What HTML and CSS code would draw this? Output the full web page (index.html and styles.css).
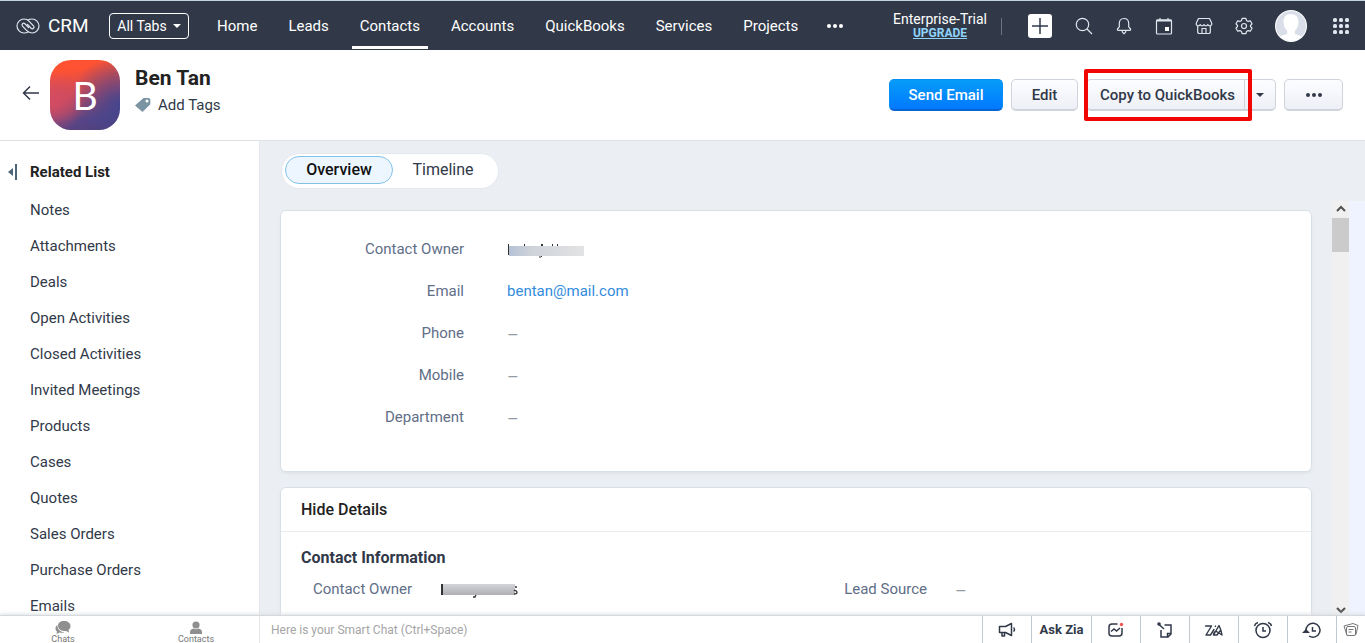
FILE: index.html
```html
<!DOCTYPE html>
<html lang="en">

<head>
    <meta charset="UTF-8">
    <meta name="viewport" content="width=device-width, initial-scale=1.0">
    <title>Ben Tan - CRM</title>
    <link rel="stylesheet" href="styles.css">
</head>

<body>
    <header class="topbar">
        <a href="#" class="logo">
            <svg width="24" height="16" viewBox="0 0 24 16" fill="none" stroke="#dfe6ee" stroke-width="1.2" stroke-linecap="round">
                <path d="M12 14c-1 .700-2.300 1-4 1A7 7 0 0 1 8 1c2.200 0 3.800.800 5.200 2.300l4.300 4.500c1.500 1.700-.700 4-2.400 2.400L11.500 6.500"/>
                <path d="M12 2c1-.700 2.300-1 4-1a7 7 0 0 1 0 14c-2.200 0-3.800-.800-5.200-2.300L6.500 8.200C5 6.500 7.200 4.200 8.900 5.800l3.600 3.700"/>
            </svg>
            <span>CRM</span>
        </a>
        <button class="allTabs">All Tabs <span class="caret"></span></button>
        <nav class="tabs">
            <a href="#">Home</a>
            <a href="#">Leads</a>
            <a href="#" class="active">Contacts</a>
            <a href="#">Accounts</a>
            <a href="#">QuickBooks</a>
            <a href="#">Services</a>
            <a href="#">Projects</a>
        </nav>
        <button class="iconBtn moreTabs" aria-label="More tabs">
            <svg width="18" height="6" fill="#fff"><circle cx="3" cy="3" r="2"/><circle cx="9" cy="3" r="2"/><circle cx="15" cy="3" r="2"/></svg>
        </button>
        <div class="trial">
            <span>Enterprise-Trial</span>
            <a href="#">UPGRADE</a>
        </div>
        <div class="tools">
            <button class="iconBtn" aria-label="Create">
                <svg width="26" height="26"><rect x="1" y="1" width="24" height="24" rx="3" fill="#fff"/><path d="M5 13h16M13 5v16" stroke="#313949" stroke-width="1.500"/></svg>
            </button>
            <button class="iconBtn" aria-label="Search">
                <svg width="18" height="18" fill="none" stroke="#dfe6ee" stroke-width="1.200"><circle cx="7.500" cy="7.500" r="6.200"/><path d="M12 12l5 5"/></svg>
            </button>
            <button class="iconBtn" aria-label="Notifications">
                <svg width="18" height="18" fill="none" stroke="#dfe6ee" stroke-width="1.200" stroke-linejoin="round"><path d="M9 1.500c-3 0-4.700 2-4.700 5v3.300L2.500 12c-.300.800 0 1.300.800 1.300h11.400c.800 0 1.100-.500.800-1.300l-1.800-2.200V6.500c0-3-1.700-5-4.700-5z"/><path d="M7 13.500c0 1.500 1 2.500 2 3.300 1-.800 2-1.800 2-3.300"/></svg>
            </button>
            <button class="iconBtn" aria-label="Calendar">
                <svg width="18" height="18" fill="none" stroke="#dfe6ee" stroke-width="1.200"><rect x="1.500" y="3" width="15" height="14" rx="1"/><path d="M1.500 3.500h15" stroke-width="2"/><path d="M5 1v3M13 1v3"/><rect x="10" y="10" width="4" height="4" fill="#fff" stroke="none"/></svg>
            </button>
            <button class="iconBtn" aria-label="Marketplace">
                <svg width="18" height="18" fill="none" stroke="#dfe6ee" stroke-width="1.200" stroke-linejoin="round"><path d="M3.500 1.500h11L16.700 6v1.500c-.800 1.700-3 1.700-3.900 0-.800 1.700-3 1.700-3.800 0-.800 1.700-3 1.700-3.800 0-.900 1.700-3.100 1.700-3.900 0V6zM2.700 9v6.500l1 1h10.600l1-1V9M7 16.500v-5h4v5"/></svg>
            </button>
            <button class="iconBtn" aria-label="Setup">
                <svg width="18" height="18" fill="none" stroke="#dfe6ee" stroke-width="1.200" stroke-linejoin="round"><circle cx="9" cy="9" r="2.500"/><path d="M7.200 1.300h3.600l.700 2.200 1.500.900 2.300-.600 1.700 3-1.500 1.700v1l1.500 1.700-1.700 3-2.300-.600-1.500.900-.700 2.200H7.200l-.700-2.200-1.500-.900-2.300.600-1.700-3 1.500-1.700v-1L1 6.800l1.700-3 2.300.600 1.500-.900z"/></svg>
            </button>
            <button class="iconBtn" aria-label="Profile">
                <svg width="32" height="32"><defs><clipPath id="round"><circle cx="16" cy="16" r="15"/></clipPath></defs><circle cx="16" cy="16" r="16" fill="#fff"/><g clip-path="url(#round)"><rect width="32" height="32" fill="#d9dee8"/><path fill="#fff" d="M16 4c-4.800 0-7.500 3-7.500 7.500 0 4 1.300 7.300 3.700 9.300v3c-1.500 1-5 1.300-7.700 3V32h23v-5.200c-2.700-1.700-6.200-2-7.700-3v-3c2.400-2 3.700-5.300 3.700-9.300C23.500 7 20.800 4 16 4z"/></g></svg>
            </button>
            <button class="iconBtn apps" aria-label="Apps">
                <svg width="18" height="18" fill="#dfe6ee"><rect x="1" y="1" width="4" height="4" rx="1.500"/><rect x="7" y="1" width="4" height="4" rx="1.500"/><rect x="13" y="1" width="4" height="4" rx="1.500"/><rect x="1" y="7" width="4" height="4" rx="1.500"/><rect x="7" y="7" width="4" height="4" rx="1.500"/><rect x="13" y="7" width="4" height="4" rx="1.500"/><rect x="1" y="13" width="4" height="4" rx="1.500"/><rect x="7" y="13" width="4" height="4" rx="1.500"/><rect x="13" y="13" width="4" height="4" rx="1.500"/></svg>
            </button>
        </div>
    </header>

    <section class="record">
        <button class="iconBtn back" aria-label="Back">
            <svg width="18" height="16" fill="none" stroke="#313949" stroke-width="1.500"><path d="M17 8H1.500M8 1.500L1.500 8 8 14.500"/></svg>
        </button>
        <div class="avatar">B</div>
        <div class="who">
            <h1>Ben Tan</h1>
            <a href="#" class="addTags">
                <svg width="16" height="16"><path fill="#7b94a3" d="M8.500 1H14l1.300 1.300v5L7.500 15 0 8.500z"/><circle cx="12" cy="4" r="1.500" fill="#fff"/></svg>
                Add Tags
            </a>
        </div>
        <div class="actions">
            <button class="btn primary">Send Email</button>
            <button class="btn edit">Edit</button>
            <div class="split">
                <button class="btn copy">Copy to QuickBooks</button>
                <button class="btn drop" aria-label="More copy options"><span class="caret"></span></button>
                <div class="highlight"></div>
            </div>
            <button class="btn more" aria-label="More actions">
                <svg width="18" height="6" fill="#313949"><circle cx="3" cy="3" r="2"/><circle cx="9" cy="3" r="2"/><circle cx="15" cy="3" r="2"/></svg>
            </button>
        </div>
    </section>

    <div class="main">
        <aside class="related">
            <h2>
                <svg width="10" height="16"><path fill="#4c6577" d="M0 8l5-4v8zM7 0h2v16H7z"/></svg>
                Related List
            </h2>
            <a href="#">Notes</a>
            <a href="#">Attachments</a>
            <a href="#">Deals</a>
            <a href="#">Open Activities</a>
            <a href="#">Closed Activities</a>
            <a href="#">Invited Meetings</a>
            <a href="#">Products</a>
            <a href="#">Cases</a>
            <a href="#">Quotes</a>
            <a href="#">Sales Orders</a>
            <a href="#">Purchase Orders</a>
            <a href="#">Emails</a>
        </aside>

        <main class="content">
            <div class="switch">
                <button class="on">Overview</button>
                <button>Timeline</button>
            </div>
            <div class="scroller">
                <div class="cards">
                    <section class="card">
                        <dl class="summary">
                            <dt>Contact Owner</dt>
                            <dd>
                                <svg width="80" height="18"><defs><linearGradient id="smudge"><stop offset="0" stop-color="#b4c1d6"/><stop offset=".3" stop-color="#cfd3d9"/><stop offset="1" stop-color="#e2e3e4"/></linearGradient></defs><path fill="#333" d="M1 4h1v11H1zM17 4h1v3h-1zM34 4h2v2h-2zM45 4h1v3h-1zM50 4h1v3h-1z"/><rect x="2" y="6" width="75" height="10" fill="url(#smudge)"/><path fill="none" stroke="#333" d="M32 17h2l1-1"/></svg>
                            </dd>
                            <dt>Email</dt>
                            <dd><a href="#">bentan@mail.com</a></dd>
                            <dt>Phone</dt>
                            <dd class="empty">–</dd>
                            <dt>Mobile</dt>
                            <dd class="empty">–</dd>
                            <dt>Department</dt>
                            <dd class="empty">–</dd>
                        </dl>
                    </section>
                    <section class="card details">
                        <h3>Hide Details</h3>
                        <h4>Contact Information</h4>
                        <dl class="info">
                            <dt>Contact Owner</dt>
                            <dd>
                                <svg width="80" height="18"><defs><linearGradient id="smudge2" x2="0" y2="1"><stop offset="0" stop-color="#d3d4d8"/><stop offset="1" stop-color="#aeb0b6"/></linearGradient></defs><rect x="3" y="4" width="72" height="11" fill="url(#smudge2)"/><path fill="#333" d="M1 4h2v11H1z"/><path fill="none" stroke="#333" stroke-width="1.300" d="M33 17h2l1-2M77 7h-2M74 10c1 1 3 0 3 2.500 0 1.500-1.500 1.500-3 1.500"/></svg>
                            </dd>
                            <dt>Lead Source</dt>
                            <dd class="empty">–</dd>
                        </dl>
                    </section>
                </div>
                <div class="scrollbar">
                    <svg width="10" height="8" fill="none" stroke="#505050" stroke-width="2"><path d="M1 6l4-4 4 4"/></svg>
                    <div class="thumb"></div>
                    <svg width="10" height="8" fill="none" stroke="#505050" stroke-width="2"><path d="M1 2l4 4 4-4"/></svg>
                </div>
                <div class="strip"></div>
            </div>
        </main>
    </div>

    <footer class="bottombar">
        <div class="chatTabs">
            <button>
                <svg width="16" height="14" fill="#8f8f8f"><path d="M9 0c3.800 0 6.500 2 6.500 5 0 1.700-.800 3-2 4l.500 2.500L11 10c-4 .500-8-1.500-8-5s2.500-5 6-5z"/><path d="M2.300 4C1 5 .500 6 .500 7.500c0 1.300.600 2.300 1.500 3L1.500 13l3-1.500c1.500.500 3.500.500 5-.200C5.500 11 2.300 8.500 2.300 4z"/></svg>
                Chats
            </button>
            <button>
                <svg width="14" height="14" fill="#8f8f8f"><circle cx="7" cy="4" r="3.600"/><path d="M1 13V11c0-2 1.500-3 3.500-3.500 1.500 1 3.500 1 5 0C11.500 8 13 9 13 11v2z"/></svg>
                Contacts
            </button>
        </div>
        <input type="text" class="smartChat" aria-label="Smart Chat" placeholder="Here is your Smart Chat (Ctrl+Space)">
        <div class="dock">
            <button aria-label="Announcements">
                <svg width="18" height="16" fill="none" stroke="#313949" stroke-width="1.500" stroke-linejoin="round"><path d="M1.500 4.500h6l6-3v12l-6-3h-6zM4 10.500V14h2.500v-3M15.500 5.500c1.300 1 1.300 3 0 4"/></svg>
            </button>
            <button class="zia">Ask Zia</button>
            <button aria-label="Insights">
                <svg width="18" height="16" fill="none" stroke="#313949" stroke-width="1.500"><path d="M10.500 2H5C3 2 2 3 2 5v6c0 2 1 3 3 3h7c2 0 3-1 3-3V6M4 9.500l3-2.500 2.500 2L13 6"/><circle cx="14.500" cy="2.500" r="1.700" fill="#ef5350" stroke="none"/></svg>
            </button>
            <button aria-label="Sticky notes">
                <svg width="18" height="16" fill="none" stroke="#313949" stroke-width="1.500"><path d="M8.500 3H15v9l-3 3H5V8M15 11.500h-3.500V15M3 2.500l5 4.500"/><circle cx="3" cy="2" r="1.800" fill="#313949" stroke="none"/></svg>
            </button>
            <button aria-label="Zia tools">
                <svg width="20" height="16" fill="none" stroke="#313949" stroke-width="1.400" stroke-linecap="round" stroke-linejoin="round"><path d="M1.500 4h6L2 13h4.500L10 7.500M11.300 4.500l.300-.500M9.500 13L15 3.500c1.500 3 2.500 6 3 9.500l-5.500-3.500c-1.500-.500-3 1-3 3.500h3.500l3-4"/></svg>
            </button>
            <button aria-label="Reminders">
                <svg width="20" height="18" fill="none" stroke="#313949" stroke-width="1.500"><circle cx="10" cy="9.500" r="7"/><path d="M10 6v4h3M1.500 5c.500-2 1.700-3 3.500-3.500M18.500 5c-.500-2-1.700-3-3.500-3.500"/></svg>
            </button>
            <button aria-label="Recent items">
                <svg width="20" height="18" fill="none" stroke="#313949" stroke-width="1.500"><path d="M4 10a7 7 0 1 1 3 5M10.500 6v4H14"/><path fill="#313949" stroke="none" d="M0 12l4-4 4 4z"/></svg>
            </button>
            <button class="last" aria-label="Windows">
                <svg width="16" height="16" fill="#fff" stroke="#777"><path d="M1 4l9-2.500 5 2-2 9-9 1z"/><rect x="3.500" y="4.500" width="9" height="9" rx="1.500"/><path d="M5.500 7.500h5M5.500 10h3"/></svg>
            </button>
        </div>
    </footer>
</body>

</html>
```
FILE: styles.css
```css
* {
    margin: 0;
    padding: 0;
    box-sizing: border-box;
}

body {
    display: flex;
    flex-direction: column;
    height: 100vh;
    overflow: hidden;
    font-family: Roboto, "Liberation Sans", sans-serif;
    font-size: 15px;
    line-height: 20px;
    color: #313949;
    background-color: #ebeff3;
}

a {
    color: inherit;
    text-decoration: none;
}

button {
    font: inherit;
    color: inherit;
    border: none;
    background: none;
    cursor: pointer;
}

svg {
    display: block;
    flex-shrink: 0;
}

.iconBtn {
    display: flex;
    align-items: center;
    justify-content: center;
}

.caret {
    border: 4px solid transparent;
    border-top-color: currentColor;
    border-bottom: none;
}

/* top navigation */
.topbar {
    display: flex;
    align-items: center;
    flex-shrink: 0;
    height: 50px;
    padding: 0 15px 0 16px;
    border-top: 1px solid #c3d3df;
    background-color: #313949;
    color: #fff;
}

.logo {
    display: flex;
    align-items: center;
    gap: 8px;
    width: 93px;
    font-size: 19px;
}

.allTabs {
    display: flex;
    align-items: center;
    justify-content: center;
    gap: 6px;
    width: 80px;
    height: 26px;
    border: 1px solid #fff;
    border-radius: 4px;
    font-size: 14px;
}

.tabs {
    display: flex;
    gap: 15px;
    height: 100%;
    margin-left: 20px;
}

.tabs a {
    padding: 15px 8px 10px;
    border-bottom: 3px solid transparent;
    height: 48px;
}

.tabs .active {
    border-bottom-color: #fff;
}

.moreTabs {
    margin-left: 20px;
}

.trial {
    display: flex;
    flex-direction: column;
    align-items: center;
    margin-left: auto;
    padding-right: 15px;
    font-size: 14px;
    line-height: 14px;
    position: relative;
}

.trial::after {
    content: "";
    position: absolute;
    right: 0;
    top: 6px;
    width: 1px;
    height: 17px;
    background-color: #6b7483;
}

.trial a {
    color: #8fd3fa;
    font-size: 12px;
    font-weight: bold;
    text-decoration: underline;
}

.tools {
    display: flex;
    align-items: center;
    gap: 22px;
    margin-left: 25px;
}

.apps {
    margin-left: 3px;
}

/* record header */
.record {
    display: flex;
    align-items: center;
    flex-shrink: 0;
    height: 91px;
    padding: 0 22px;
    border-bottom: 1px solid #dce1e6;
    background-color: #fff;
}

.back {
    margin: 0 10px 4px 0;
}

.avatar {
    display: flex;
    align-items: center;
    justify-content: center;
    width: 70px;
    height: 70px;
    border-radius: 21px;
    color: #fff;
    font-family: Lato, sans-serif;
    font-size: 39px;
    background: radial-gradient(circle at 5% 60%, #d44c63 0, transparent 40%), radial-gradient(circle at 100% 65%, #44458d 0, transparent 60%), linear-gradient(170deg, #ff5232 15%, #c64a5c 50%, #594586 80%, #553e78);
}

.who {
    margin: 0 auto 8px 15px;
}

.who h1 {
    font-size: 21px;
    line-height: 28px;
    color: #222;
}

.addTags {
    display: flex;
    align-items: center;
    gap: 7px;
    line-height: 26px;
}

.actions {
    display: flex;
    gap: 8px;
}

.btn {
    display: flex;
    align-items: center;
    justify-content: center;
    height: 32px;
    border: 1px solid #cfd3dc;
    border-bottom-width: 2px;
    border-radius: 5px;
    background: linear-gradient(#fdfdff, #eef0f7);
    font-weight: 500;
}

.primary {
    width: 114px;
    border-color: #068ff5 #068ff5 #0664d3;
    background: linear-gradient(#069cf8, #0279ff);
    color: #fff;
}

.edit {
    width: 67px;
}

.split {
    display: flex;
    position: relative;
}

.copy {
    width: 159px;
    padding-left: 4px;
    border-radius: 5px 0 0 5px;
}

.drop {
    width: 31px;
    border-left: none;
    border-radius: 0 5px 5px 0;
}

.highlight {
    position: absolute;
    top: -10px;
    left: -2px;
    width: 168px;
    height: 52px;
    border: 4px solid #f20505;
    border-radius: 2px;
    pointer-events: none;
}

.more {
    width: 59px;
}

/* page body */
.main {
    display: flex;
    flex: 1;
    min-height: 0;
}

.related {
    display: flex;
    flex-direction: column;
    flex-shrink: 0;
    width: 260px;
    padding: 12px 8px 0;
    overflow: hidden;
    border-right: 1px solid #e4e8ee;
    background-color: #fff;
}

.related h2 {
    display: flex;
    align-items: center;
    gap: 12px;
    margin-bottom: 1px;
    font-size: 15px;
    font-weight: bold;
    line-height: 38px;
    color: #222;
}

.related a {
    padding-left: 22px;
    line-height: 36px;
}

.content {
    display: flex;
    flex-direction: column;
    flex: 1;
    min-width: 0;
}

.switch {
    display: flex;
    align-self: flex-start;
    flex-shrink: 0;
    height: 36px;
    margin: 12px 0 12px 21px;
    padding: 2px 5px 4px 3px;
    border: 1px solid #e4e9ee;
    border-radius: 18px;
    background-color: #fff;
    font-size: 16px;
}

.switch button {
    width: 100px;
    border-radius: 14px;
}

.switch .on {
    width: 108px;
    border: 1px solid #81c2e8;
    background-color: #edf6ff;
    color: #111;
    font-weight: 500;
}

.scroller {
    display: flex;
    flex: 1;
    min-height: 0;
}

.cards {
    flex: 1;
    padding: 9px 20px 0;
    overflow: hidden;
}

.card {
    margin-bottom: 15px;
    border: 1px solid #d8e0e6;
    border-radius: 6px;
    background-color: #fff;
    box-shadow: 0 2px 3px #dfe4e8;
}

.summary {
    display: grid;
    grid-template-columns: 183px 1fr;
    column-gap: 43px;
    padding: 17px 0 33px;
    line-height: 42px;
}

dt {
    text-align: right;
    color: #616e88;
}

dd {
    display: flex;
    align-items: center;
}

dd a {
    color: #338cdd;
}

.empty {
    height: 42px;
    padding-top: 3px;
    color: #929ba5;
    font-size: 18px;
}

.details {
    padding-bottom: 30px;
}

.details h3 {
    padding: 0 20px;
    border-bottom: 1px solid #e8ebef;
    font-size: 16px;
    font-weight: 500;
    line-height: 43px;
    color: #222;
}

.details h4 {
    padding: 16px 20px 0;
    font-size: 16px;
    font-weight: bold;
}

.info {
    display: grid;
    grid-template-columns: 131px 1fr 103px 1fr;
    column-gap: 28px;
    line-height: 42px;
}

.scrollbar {
    display: flex;
    flex-direction: column;
    align-items: center;
    width: 17px;
    padding: 4px 0 1px;
    background-color: #f0f0f0;
}

.thumb {
    width: 100%;
    height: 34px;
    margin: 5px 0 auto;
    background-color: #cbcbcb;
}

.strip {
    width: 16px;
    background-color: #eff3ff;
}

/* bottom bar */
.bottombar {
    display: flex;
    flex-shrink: 0;
    height: 28px;
    border-top: 1px solid #d5d9dd;
    background-color: #fff;
    box-shadow: 0 -1px 4px #dcdfe2;
    z-index: 1;
}

.chatTabs {
    display: flex;
    gap: 7px;
    width: 260px;
    border-right: 1px solid #e3e6ea;
}

.chatTabs button {
    display: flex;
    flex: 1;
    flex-direction: column;
    align-items: center;
    padding-top: 5px;
    font-size: 9px;
    line-height: 8px;
    color: #777;
}

.smartChat {
    flex: 1;
    padding-left: 11px;
    border: none;
    outline: none;
    font: inherit;
    font-size: 12px;
}

.smartChat::placeholder {
    color: #a5a5a5;
}

.dock {
    display: flex;
}

.dock button {
    display: flex;
    align-items: center;
    justify-content: center;
    width: 49px;
    border-left: 1px solid #c3cacf;
}

.dock .zia {
    width: 60px;
    font-size: 13px;
    font-weight: bold;
}

.dock .last {
    width: 29px;
}
```
